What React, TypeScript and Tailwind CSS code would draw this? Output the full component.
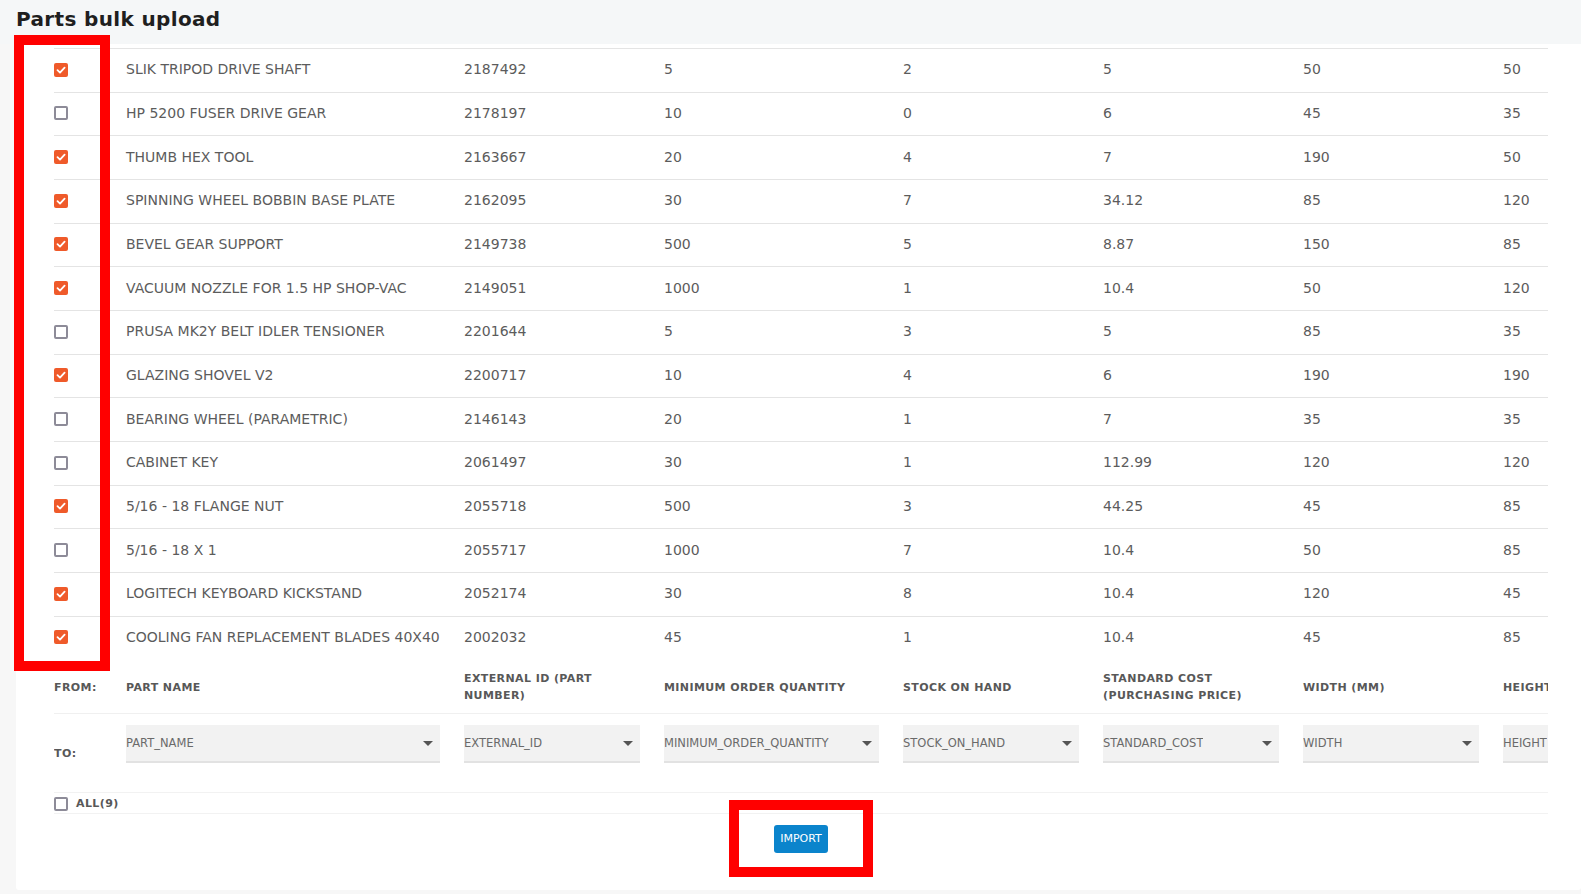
import React from 'react';

type Row = {
  checked: boolean;
  name: string;
  ext: string;
  moq: string;
  stock: string;
  cost: string;
  width: string;
  height: string;
};

const rows: Row[] = [
  { checked: true, name: 'SLIK TRIPOD DRIVE SHAFT', ext: '2187492', moq: '5', stock: '2', cost: '5', width: '50', height: '50' },
  { checked: false, name: 'HP 5200 FUSER DRIVE GEAR', ext: '2178197', moq: '10', stock: '0', cost: '6', width: '45', height: '35' },
  { checked: true, name: 'THUMB HEX TOOL', ext: '2163667', moq: '20', stock: '4', cost: '7', width: '190', height: '50' },
  { checked: true, name: 'SPINNING WHEEL BOBBIN BASE PLATE', ext: '2162095', moq: '30', stock: '7', cost: '34.12', width: '85', height: '120' },
  { checked: true, name: 'BEVEL GEAR SUPPORT', ext: '2149738', moq: '500', stock: '5', cost: '8.87', width: '150', height: '85' },
  { checked: true, name: 'VACUUM NOZZLE FOR 1.5 HP SHOP-VAC', ext: '2149051', moq: '1000', stock: '1', cost: '10.4', width: '50', height: '120' },
  { checked: false, name: 'PRUSA MK2Y BELT IDLER TENSIONER', ext: '2201644', moq: '5', stock: '3', cost: '5', width: '85', height: '35' },
  { checked: true, name: 'GLAZING SHOVEL V2', ext: '2200717', moq: '10', stock: '4', cost: '6', width: '190', height: '190' },
  { checked: false, name: 'BEARING WHEEL (PARAMETRIC)', ext: '2146143', moq: '20', stock: '1', cost: '7', width: '35', height: '35' },
  { checked: false, name: 'CABINET KEY', ext: '2061497', moq: '30', stock: '1', cost: '112.99', width: '120', height: '120' },
  { checked: true, name: '5/16 - 18 FLANGE NUT', ext: '2055718', moq: '500', stock: '3', cost: '44.25', width: '45', height: '85' },
  { checked: false, name: '5/16 - 18 X 1', ext: '2055717', moq: '1000', stock: '7', cost: '10.4', width: '50', height: '85' },
  { checked: true, name: 'LOGITECH KEYBOARD KICKSTAND', ext: '2052174', moq: '30', stock: '8', cost: '10.4', width: '120', height: '45' },
  { checked: true, name: 'COOLING FAN REPLACEMENT BLADES 40X40', ext: '2002032', moq: '45', stock: '1', cost: '10.4', width: '45', height: '85' },
];

// column widths, each cell keeps 24px on its right
const cols = ['w-[72px]', 'w-[338px]', 'w-[200px]', 'w-[239px]', 'w-[200px]', 'w-[200px]', 'w-[200px]', 'w-[200px]'];

const headers = [
  'PART NAME',
  'EXTERNAL ID (PART NUMBER)',
  'MINIMUM ORDER QUANTITY',
  'STOCK ON HAND',
  'STANDARD COST (PURCHASING PRICE)',
  'WIDTH (MM)',
  'HEIGHT (MM)',
];

const fields = ['PART_NAME', 'EXTERNAL_ID', 'MINIMUM_ORDER_QUANTITY', 'STOCK_ON_HAND', 'STANDARD_COST', 'WIDTH', 'HEIGHT'];

const Checkbox: React.FC<{ checked: boolean }> = ({ checked }) =>
  checked ? (
    <span className="flex h-[14px] w-[14px] items-center justify-center rounded-[2px] bg-[#ef5a2a]">
      <svg viewBox="0 0 14 14" className="h-[14px] w-[14px]">
        <polyline points="3.5,7.2 6,9.6 10.6,4.6" fill="none" stroke="#fff" strokeWidth="1.8" strokeLinecap="round" strokeLinejoin="round" />
      </svg>
    </span>
  ) : (
    <span className="block h-[14px] w-[14px] rounded-[2px] border-2 border-[#8d8b98] bg-white" />
  );

const Select: React.FC<{ value: string }> = ({ value }) => (
  <div className="flex h-[38px] items-center justify-between border-b-2 border-[#e2e2e2] bg-[#f2f2f2] pr-[7px]">
    <span className="overflow-hidden whitespace-nowrap text-[11.5px] text-[#6a6a6a]">{value}</span>
    <svg viewBox="0 0 10 5" className="h-[5px] w-[10px] shrink-0">
      <polygon points="0,0 10,0 5,5" fill="#555" />
    </svg>
  </div>
);

export default function App() {
  return (
    <div className="relative min-h-[894px] bg-[#f7f7f7] font-['DejaVu_Sans',sans-serif]">
      {/* Title band */}
      <div className="h-[44px] bg-[#f5f7f8] px-4 pt-[5px]">
        <h1 className="text-[20px] font-bold leading-[28px] tracking-[0.35px] text-[#1f1f1f]">Parts bulk upload</h1>
      </div>

      {/* Card */}
      <div className="ml-4 rounded-b-[3px] bg-white pb-[37px] pt-1">
        <div className="ml-[38px] w-[1494px] overflow-hidden">
          <div className="w-max">
            {rows.map((r, i) => (
              <div key={i} className="flex h-[43.67px] items-center border-t border-[#e4e4e4] pb-px text-[14px] text-[#5c5c5c]">
                <div className={`${cols[0]} shrink-0`}>
                  <Checkbox checked={r.checked} />
                </div>
                {[r.name, r.ext, r.moq, r.stock, r.cost, r.width, r.height].map((v, j) => (
                  <div key={j} className={`${cols[j + 1]} shrink-0 whitespace-nowrap pr-6`}>
                    {v}
                  </div>
                ))}
              </div>
            ))}

            {/* FROM header */}
            <div className="flex h-[55px] items-center border-b border-[#f0f0f0] pt-[2px] text-[11px] font-bold leading-[17px] tracking-[0.4px] text-[#585858]">
              <div className={`${cols[0]} shrink-0`}>FROM:</div>
              {headers.map((h, j) => (
                <div key={j} className={`${cols[j + 1]} shrink-0 pr-6 ${j === 6 ? 'whitespace-nowrap' : ''}`}>
                  {h}
                </div>
              ))}
            </div>

            {/* TO selects */}
            <div className="flex h-[79px] border-b border-[#f2f2f2]">
              <div className={`${cols[0]} flex shrink-0 items-center pt-[2px] text-[11px] font-bold tracking-[0.4px] text-[#585858]`}>TO:</div>
              {fields.map((f, j) => (
                <div key={j} className={`${cols[j + 1]} shrink-0 pr-6 pt-[11px]`}>
                  <Select value={f} />
                </div>
              ))}
            </div>

            {/* ALL */}
            <div className="flex h-[21px] items-center gap-2 border-b border-[#f2f2f2] pt-[2px]">
              <Checkbox checked={false} />
              <span className="text-[11px] font-bold tracking-[0.4px] text-[#585858]">ALL(9)</span>
            </div>
          </div>

          <div className="flex justify-center pt-[11px]">
            <button className="h-[28px] w-[54px] rounded-[3px] bg-[#0b84cc] pt-px text-[11px] text-white">IMPORT</button>
          </div>
        </div>
      </div>

      {/* Red annotation boxes */}
      <div className="absolute left-[14px] top-[35px] h-[636px] w-[96px] border-[10px] border-[#ff0000]" />
      <div className="absolute left-[729px] top-[800px] h-[77px] w-[144px] border-[10px] border-[#ff0000]" />
    </div>
  );
}
